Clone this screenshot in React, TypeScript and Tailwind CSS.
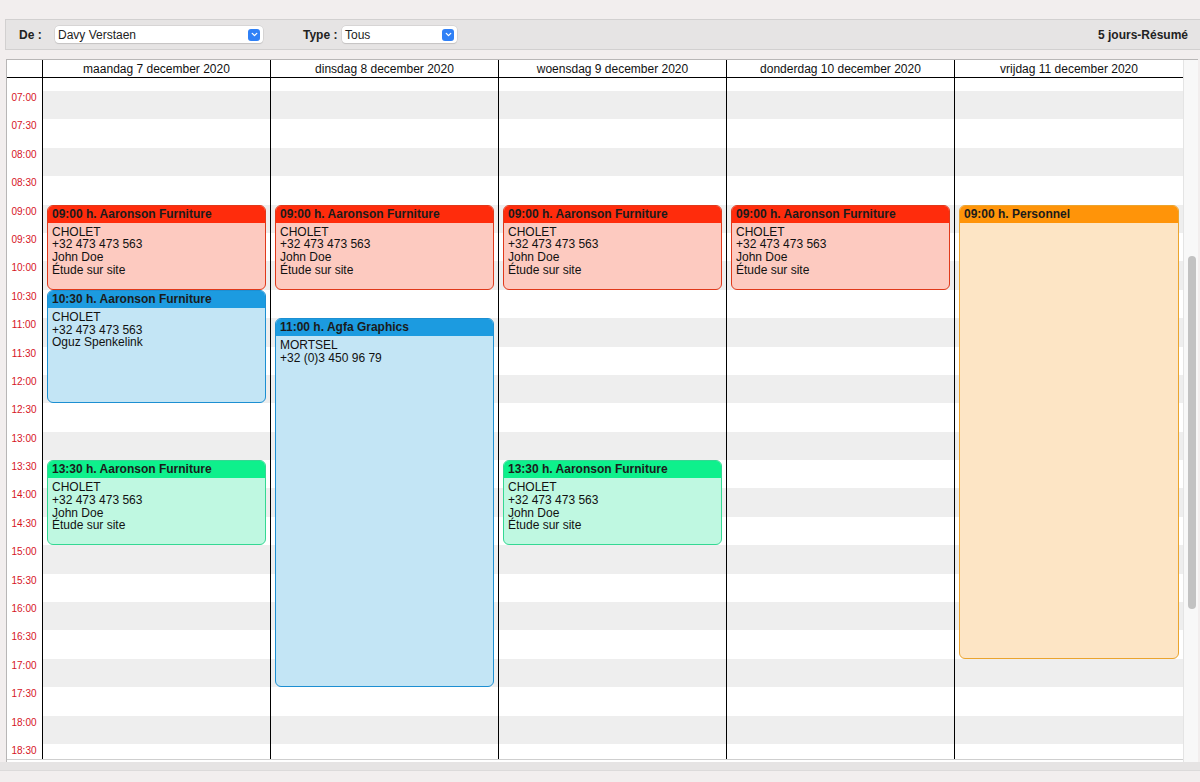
import { ChevronDown } from 'lucide-react';

const days = [
  'maandag 7 december 2020',
  'dinsdag 8 december 2020',
  'woensdag 9 december 2020',
  'donderdag 10 december 2020',
  'vrijdag 11 december 2020',
];

const times: string[] = [];
for (let h = 7; h <= 18; h++) {
  const hh = h < 10 ? `0${h}` : `${h}`;
  times.push(`${hh}:00`, `${hh}:30`);
}

const SLOT = 28.4;
const OFFSET = 13;

type Tone = 'red' | 'blue' | 'green' | 'orange';

const tones: Record<Tone, { head: string; body: string }> = {
  red: { head: 'bg-[#ff2c0c]', body: 'bg-[#fdcac0] border-[#e0391b]' },
  blue: { head: 'bg-[#1c9be0]', body: 'bg-[#c3e5f5] border-[#1c8fd2]' },
  green: { head: 'bg-[#0ef08c]', body: 'bg-[#bff8e1] border-[#34d893]' },
  orange: { head: 'bg-[#ff9409]', body: 'bg-[#fde5c5] border-[#eba42e]' },
};

type Ev = { day: number; start: number; slots: number; tone: Tone; title: string; lines: string[] };

const etude = ['CHOLET', '+32 473 473 563', 'John Doe', 'Étude sur site'];

const events: Ev[] = [
  { day: 0, start: 4, slots: 3, tone: 'red', title: '09:00 h. Aaronson Furniture', lines: etude },
  { day: 1, start: 4, slots: 3, tone: 'red', title: '09:00 h. Aaronson Furniture', lines: etude },
  { day: 2, start: 4, slots: 3, tone: 'red', title: '09:00 h. Aaronson Furniture', lines: etude },
  { day: 3, start: 4, slots: 3, tone: 'red', title: '09:00 h. Aaronson Furniture', lines: etude },
  { day: 4, start: 4, slots: 16, tone: 'orange', title: '09:00 h. Personnel', lines: [] },
  {
    day: 0,
    start: 7,
    slots: 4,
    tone: 'blue',
    title: '10:30 h. Aaronson Furniture',
    lines: ['CHOLET', '+32 473 473 563', 'Oguz Spenkelink'],
  },
  {
    day: 1,
    start: 8,
    slots: 13,
    tone: 'blue',
    title: '11:00 h. Agfa Graphics',
    lines: ['MORTSEL', '+32 (0)3 450 96 79'],
  },
  { day: 0, start: 13, slots: 3, tone: 'green', title: '13:30 h. Aaronson Furniture', lines: etude },
  { day: 2, start: 13, slots: 3, tone: 'green', title: '13:30 h. Aaronson Furniture', lines: etude },
];

function Select({ value, width }: { value: string; width: string }) {
  return (
    <div
      className={`${width} h-[17px] bg-white rounded-[4px] shadow-[0_0_0_0.5px_#c8c6c6,0_1px_1px_rgba(0,0,0,0.15)] flex items-center justify-between pl-[3px] pr-[3px]`}
    >
      <span className="text-[12px] text-[#222]">{value}</span>
      <span className="w-[12px] h-[12px] rounded-[3px] bg-[#2f80f6] flex items-center justify-center">
        <ChevronDown className="w-[9px] h-[9px] text-white" strokeWidth={3.5} />
      </span>
    </div>
  );
}

function Stripes() {
  return (
    <div className="flex flex-col">
      <div className="h-[13px] bg-white" />
      {times.map((t, i) => (
        <div key={t} className={`h-[28.4px] shrink-0 ${i % 2 === 0 ? 'bg-[#eeeeee]' : 'bg-white'}`} />
      ))}
    </div>
  );
}

function EventCard({ ev }: { ev: Ev }) {
  const tone = tones[ev.tone];
  return (
    <div
      className={`absolute left-[4px] right-[4px] rounded-[6px] border overflow-hidden ${tone.body}`}
      style={{ top: OFFSET + ev.start * SLOT, height: ev.slots * SLOT }}
    >
      <div className={`h-[17px] ${tone.head} pl-[4px] text-[12px] font-bold leading-[17px] text-[#1b1b1b]`}>
        {ev.title}
      </div>
      <div className="pl-[4px] pt-[3px] text-[12px] leading-[12.7px] text-[#111]">
        {ev.lines.map((l) => (
          <div key={l}>{l}</div>
        ))}
      </div>
    </div>
  );
}

export default function App() {
  return (
    <div
      className="w-[1200px] h-[782px] bg-[#f2eeee] overflow-hidden flex flex-col"
      style={{ fontFamily: '"Liberation Sans", Arial, sans-serif' }}
    >
      <div className="h-[19px]" />
      <div className="ml-[5px] h-[31px] bg-[#e6e4e4] border-y border-l border-[#d2d0d0] flex items-center text-[12px] text-[#222]">
        <span className="ml-[13px] font-bold w-[36px]">De :</span>
        <Select value="Davy Verstaen" width="w-[208px]" />
        <span className="ml-[40px] font-bold w-[39px]">Type :</span>
        <Select value="Tous" width="w-[115px]" />
        <span className="ml-auto mr-[12px] font-bold">5 jours-Résumé</span>
      </div>
      <div className="h-[9px]" />
      <div className="ml-[6px] mr-[2px] h-[703px] bg-white border-t border-l border-[#b8b6b6] flex">
        <div className="w-[1176px] flex flex-col">
          <div className="h-[18px] flex border-b border-black">
            <div className="w-[35px] shrink-0" />
            {days.map((d, di) => (
              <div
                key={d}
                className={`${di < 4 ? 'w-[228px] shrink-0' : 'flex-1'} border-l border-black flex items-center justify-center text-[12px] text-[#111]`}
              >
                {d}
              </div>
            ))}
          </div>
          <div className="h-[682px] flex overflow-hidden border-b border-[#cfcfcf]">
            <div className="w-[35px] shrink-0 flex flex-col bg-white">
              <div className="h-[13px] shrink-0" />
              {times.map((t) => (
                <div
                  key={t}
                  className="h-[28.4px] shrink-0 text-[10px] leading-[12px] pt-[1px] text-[#d6141e] text-center pr-[1px]"
                >
                  {t}
                </div>
              ))}
            </div>
            {days.map((d, di) => (
              <div
                key={d}
                className={`${di < 4 ? 'w-[228px] shrink-0' : 'flex-1'} relative border-l border-black`}
              >
                <Stripes />
                {events
                  .filter((e) => e.day === di)
                  .map((e) => (
                    <EventCard key={e.title + e.start} ev={e} />
                  ))}
              </div>
            ))}
          </div>
        </div>
        <div className="flex-1 bg-[#f8f8f8] border-l border-[#e4e4e4] relative">
          <div className="absolute left-[4px] top-[196px] w-[8px] h-[353px] rounded-full bg-[#c2c2c2]" />
        </div>
      </div>
      <div className="h-[9px] bg-[#e6e4e4] border-b border-[#dcdada]" />
    </div>
  );
}
